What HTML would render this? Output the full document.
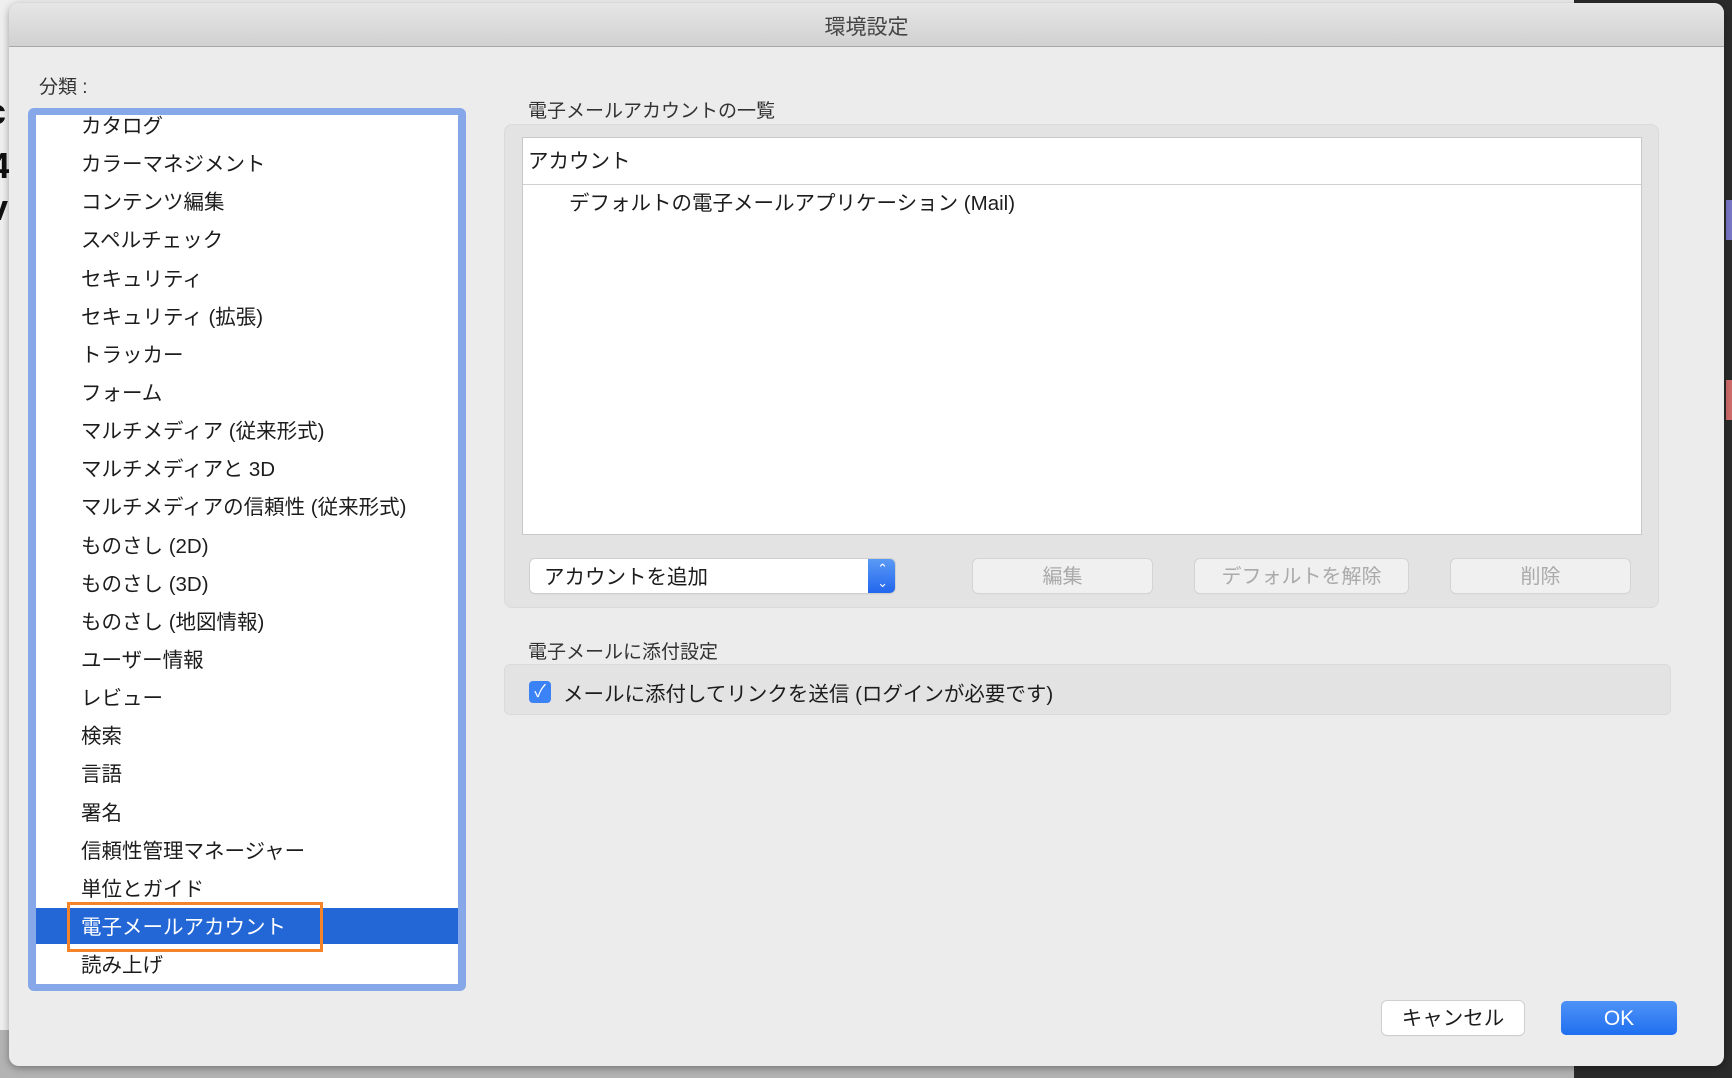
<!DOCTYPE html>
<html><head><meta charset="utf-8"><style>
*{box-sizing:border-box;margin:0;padding:0}
body{width:1732px;height:1078px;overflow:hidden;background:#e6e6e6;position:relative;font-family:"Liberation Sans","Noto Sans CJK JP",sans-serif;color:#1c1c1c}
.abs{position:absolute}
.t{position:absolute;white-space:nowrap;font-size:20px;line-height:24px}
</style></head><body>
<div class="abs" style="left:0;top:0;width:1732px;height:1078px;background:#efefef"></div>
<div class="abs" style="left:0;top:1030px;width:1574px;height:48px;background:#b3b3b3"></div>
<div class="abs" style="left:1574px;top:0;width:158px;height:1078px;background:#2b2b2b"></div>
<div class="abs" style="left:1726px;top:380px;width:6px;height:40px;background:#d06b6b"></div>
<div class="abs" style="left:1726px;top:200px;width:6px;height:40px;background:#7878c8"></div>
<div class="t" style="left:-14px;top:92px;font-size:36px;line-height:40px;font-weight:bold;color:#111">c</div>
<div class="t" style="left:-10px;top:146px;font-size:36px;line-height:40px;font-weight:bold;color:#111">4</div>
<div class="t" style="left:-12px;top:188px;font-size:36px;line-height:40px;font-weight:bold;color:#111">v</div>
<!-- dialog -->
<div class="abs" style="left:9px;top:3px;width:1715px;height:1063px;background:#ececec;border-radius:10px;box-shadow:0 2px 8px rgba(0,0,0,.35);overflow:hidden">
 <div class="abs" style="left:0;top:0;width:1715px;height:44px;background:linear-gradient(#e6e6e6,#d1d1d1);border-bottom:1px solid #a8a8a8"></div>
 <div class="t" style="left:0;width:1715px;text-align:center;top:13px;font-size:21px;color:#444">環境設定</div>
</div>
<div class="t" style="left:39px;top:76px;font-size:19px;color:#333">分類 :</div>
<!-- list -->
<div class="abs" style="left:28px;top:108px;width:438px;height:883px;background:#87a8e8;border-radius:6px"></div>
<div class="abs" style="left:36px;top:115px;width:422px;height:869px;background:#fff;overflow:hidden">
 <div class="abs" style="left:0;top:793px;width:422px;height:36px;background:#2366d6"></div>
</div>
<div id="items"></div>
<div class="abs" style="left:67px;top:902px;width:256px;height:50px;border:3px solid #f5832a"></div>
<!-- right -->
<div class="t" style="left:528px;top:100px;font-size:19px;color:#333">電子メールアカウントの一覧</div>
<div class="abs" style="left:504px;top:124px;width:1155px;height:484px;background:#e3e3e3;border-radius:8px;border:1px solid #dadada"></div>
<div class="abs" style="left:522px;top:137px;width:1120px;height:398px;background:#fff;border:1px solid #c8c8c8"></div>
<div class="abs" style="left:523px;top:184px;width:1118px;height:1px;background:#d0d0d0"></div>
<div class="t" style="left:528px;top:150px;font-size:20.5px">アカウント</div>
<div class="t" style="left:569px;top:192px;font-size:20.5px">デフォルトの電子メールアプリケーション (Mail)</div>
<div class="abs" style="left:530px;top:559px;width:365px;height:34px;background:#fff;border-radius:5px;box-shadow:0 0 0 1px #cfcfcf,0 1px 1px rgba(0,0,0,.2);overflow:hidden">
 <div class="abs" style="right:0;top:0;width:27px;height:34px;background:linear-gradient(#5a9af5,#2266ee)"></div>
 <div class="abs" style="right:7px;top:3px;color:#fff;font-size:13px;line-height:13px">&#8963;</div>
 <div class="abs" style="right:7px;top:17px;color:#fff;font-size:13px;line-height:13px">&#8964;</div>
</div>
<div class="t" style="left:544px;top:566px;font-size:20.5px">アカウントを追加</div>
<div class="abs" style="left:973px;top:559px;width:179px;height:34px;background:#f0f0f0;border-radius:5px;box-shadow:0 0 0 1px #d4d4d4,0 1px 1px rgba(0,0,0,.1);color:#aaa;font-size:20px;line-height:36px;text-align:center">編集</div>
<div class="abs" style="left:1195px;top:559px;width:213px;height:34px;background:#f0f0f0;border-radius:5px;box-shadow:0 0 0 1px #d4d4d4,0 1px 1px rgba(0,0,0,.1);color:#aaa;font-size:20px;line-height:36px;text-align:center">デフォルトを解除</div>
<div class="abs" style="left:1451px;top:559px;width:179px;height:34px;background:#f0f0f0;border-radius:5px;box-shadow:0 0 0 1px #d4d4d4,0 1px 1px rgba(0,0,0,.1);color:#aaa;font-size:20px;line-height:36px;text-align:center">削除</div>
<div class="t" style="left:528px;top:641px;font-size:19px;color:#333">電子メールに添付設定</div>
<div class="abs" style="left:504px;top:664px;width:1167px;height:51px;background:#e3e3e3;border-radius:6px;border:1px solid #dadada"></div>
<div class="abs" style="left:529px;top:681px;width:22px;height:22px;background:#3b82f6;border-radius:4px;color:#fff;font-size:17px;line-height:22px;text-align:center">✓</div>
<div class="t" style="left:563px;top:683px;font-size:20.5px">メールに添付してリンクを送信 (ログインが必要です)</div>
<div class="abs" style="left:1382px;top:1001px;width:142px;height:34px;background:#fff;border-radius:5px;box-shadow:0 0 0 1px #cfcfcf,0 1px 1px rgba(0,0,0,.2);font-size:20.5px;line-height:36px;text-align:center">キャンセル</div>
<div class="abs" style="left:1561px;top:1001px;width:116px;height:34px;background:linear-gradient(#4f93f7,#1f6ff0);border-radius:5px;color:#fff;font-size:21px;line-height:36px;text-align:center">OK</div>
<script>
var a=["カタログ","カラーマネジメント","コンテンツ編集","スペルチェック","セキュリティ","セキュリティ (拡張)","トラッカー","フォーム","マルチメディア (従来形式)","マルチメディアと 3D","マルチメディアの信頼性 (従来形式)","ものさし (2D)","ものさし (3D)","ものさし (地図情報)","ユーザー情報","レビュー","検索","言語","署名","信頼性管理マネージャー","単位とガイド","電子メールアカウント","読み上げ"];
var h="";a.forEach(function(s,i){var y=125+i*38.14-10;h+='<div class="t" style="left:81px;font-size:20.5px;top:'+y+'px;color:'+(i==21?'#fff':'#1c1c1c')+'">'+s+'</div>';});
document.getElementById("items").innerHTML=h;
</script>
</body></html>
